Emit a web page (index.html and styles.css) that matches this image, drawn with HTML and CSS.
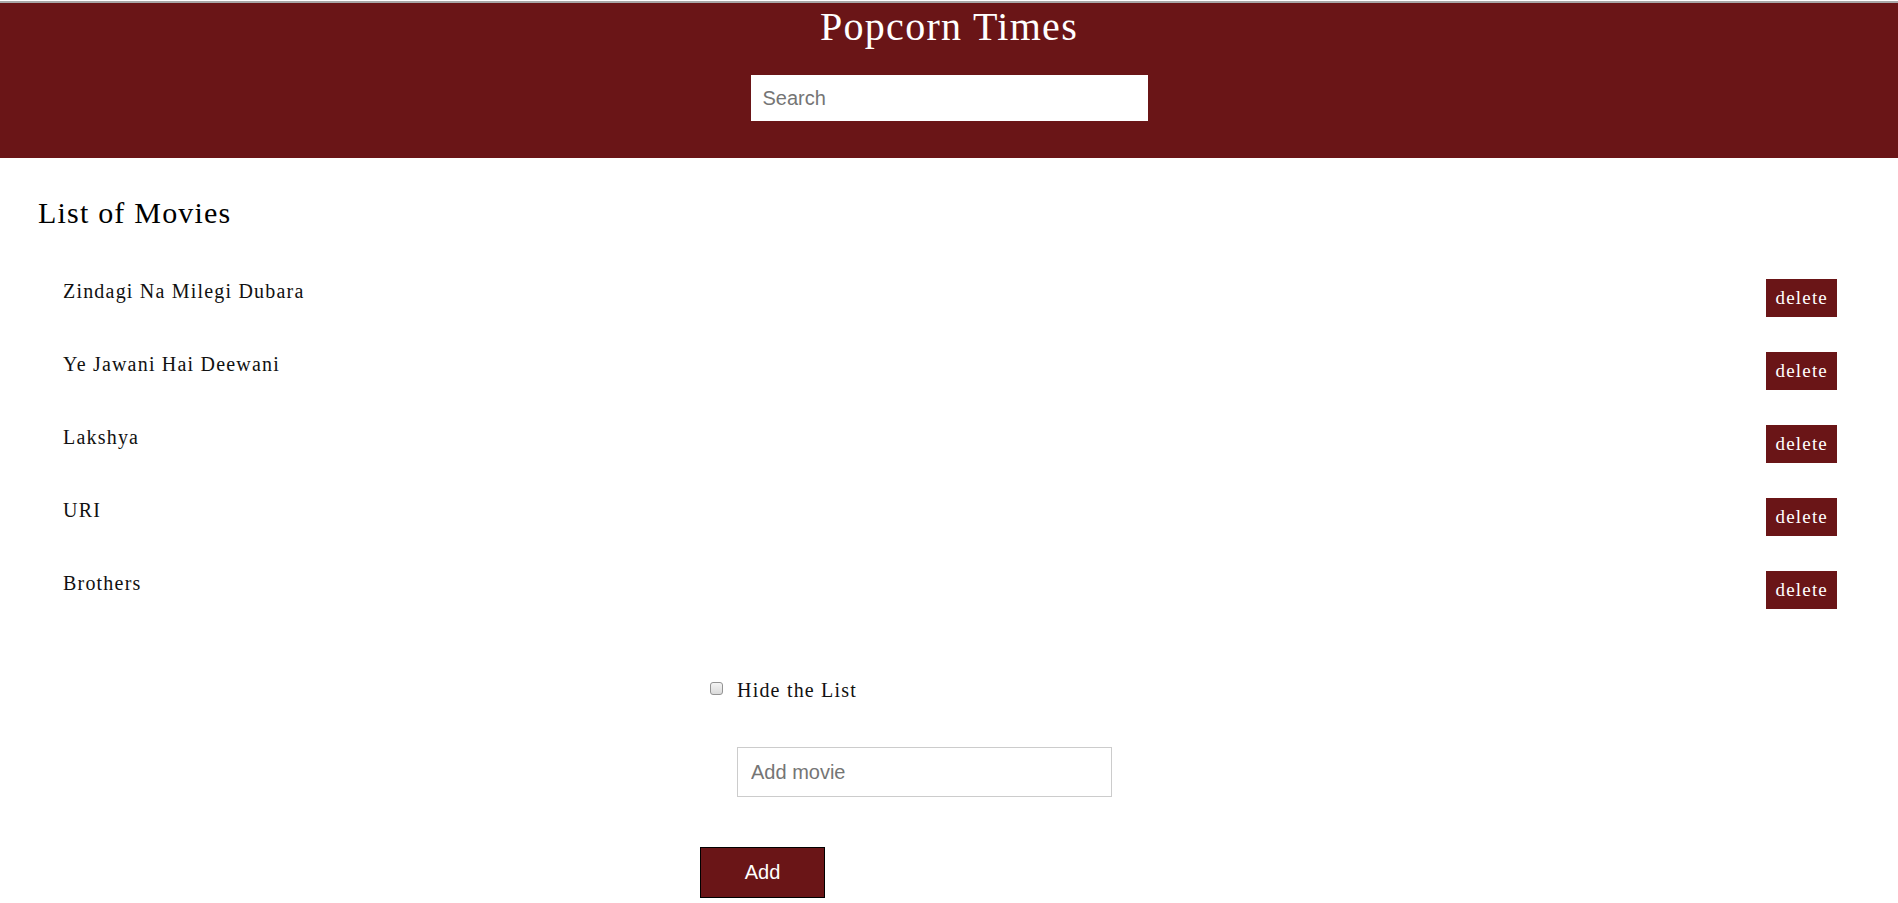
FILE: index.html
```html
<!DOCTYPE html>
<html lang="en">
<head>
<meta charset="utf-8">
<title>Popcorn Times</title>
<link rel="stylesheet" href="styles.css">
</head>
<body>
<div class="topline"></div>
<header class="header">
  <h1 class="title">Popcorn Times</h1>
  <input class="search" type="text" placeholder="Search">
</header>
<main class="content">
  <h2 class="list-title">List of Movies</h2>
  <ul class="movies">
    <li class="movie"><span class="movie-name">Zindagi Na Milegi Dubara</span><button class="delete">delete</button></li>
    <li class="movie"><span class="movie-name">Ye Jawani Hai Deewani</span><button class="delete">delete</button></li>
    <li class="movie"><span class="movie-name">Lakshya</span><button class="delete">delete</button></li>
    <li class="movie"><span class="movie-name">URI</span><button class="delete">delete</button></li>
    <li class="movie"><span class="movie-name">Brothers</span><button class="delete">delete</button></li>
  </ul>
  <form class="add-form">
    <label class="hide"><input class="hide-box" type="checkbox"><span class="hide-text">Hide the List</span></label>
    <input class="add-input" type="text" placeholder="Add movie">
    <button class="add-btn" type="button">Add</button>
  </form>
</main>
</body>
</html>
```
FILE: styles.css
```css
html, body {
  margin: 0;
  padding: 0;
  background: #fff;
}
body {
  font-family: "Liberation Serif", "Times New Roman", serif;
  color: #111;
  overflow: hidden;
}
.topline {
  height: 2px;
  margin-top: 1px;
  background: #a9a9a9;
}
.header {
  background: #6a1517;
  padding: 4px 0 37px;
  display: flex;
  flex-direction: column;
  align-items: center;
}
.title {
  margin: 0;
  font-weight: normal;
  font-size: 40px;
  line-height: 40px;
  letter-spacing: 1.3px;
  color: #fff;
}
.search {
  box-sizing: border-box;
  margin-top: 28px;
  width: 397px;
  height: 46px;
  border: none;
  padding: 1px 12px 0;
  font-family: "Liberation Sans", Arial, sans-serif;
  font-size: 20px;
  color: #333;
  background: #fff;
  outline: none;
}
.search::placeholder, .add-input::placeholder {
  color: #757575;
}
.content {
  padding: 0 61px 0 38px;
}
.list-title {
  margin: 38px 0 0;
  font-weight: normal;
  font-size: 30px;
  line-height: 34px;
  letter-spacing: 1.2px;
  color: #000;
}
.movies {
  list-style: none;
  margin: 49px 0 0;
  padding: 0 0 0 25px;
}
.movie {
  display: flex;
  justify-content: space-between;
  align-items: flex-start;
  height: 38px;
  margin-bottom: 35px;
}
.movie:last-child {
  margin-bottom: 0;
}
.movie-name {
  margin-top: 1px;
  font-size: 20px;
  line-height: 23px;
  letter-spacing: 1.2px;
}
.delete {
  height: 38px;
  padding: 0 9px;
  border: none;
  background: #6a1517;
  color: #fff;
  font-family: "Liberation Serif", "Times New Roman", serif;
  font-size: 19px;
  letter-spacing: 1.2px;
}
.add-form {
  margin: 70px 0 0 662px;
  display: flex;
  flex-direction: column;
  align-items: flex-start;
}
.hide {
  display: flex;
  align-items: flex-start;
  margin-left: 10px;
}
.hide-box {
  appearance: none;
  -webkit-appearance: none;
  box-sizing: border-box;
  width: 13px;
  height: 13px;
  margin: 3px 14px 0 0;
  border: 1px solid #939393;
  border-radius: 3px;
  background: linear-gradient(#f4f4f4, #dadada);
}
.hide-text {
  font-size: 20px;
  line-height: 23px;
  letter-spacing: 1.2px;
}
.add-input {
  box-sizing: border-box;
  margin: 45px 0 0 37px;
  width: 375px;
  height: 50px;
  border: 1px solid #cccccc;
  padding: 0 13px;
  font-family: "Liberation Sans", Arial, sans-serif;
  font-size: 20px;
  outline: none;
}
.add-btn {
  box-sizing: border-box;
  margin-top: 50px;
  width: 125px;
  height: 51px;
  border: 1px solid #000;
  background: #6a1517;
  color: #fff;
  font-family: "Liberation Sans", Arial, sans-serif;
  font-size: 20px;
}
```
